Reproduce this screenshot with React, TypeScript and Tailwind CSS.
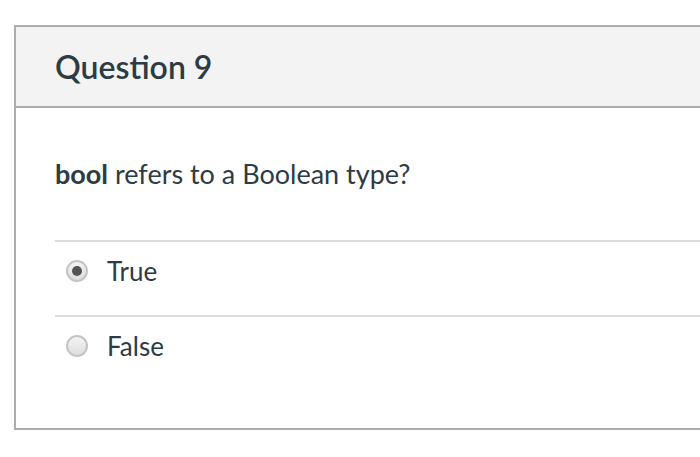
import React from 'react';

const Radio: React.FC<{ checked?: boolean }> = ({ checked }) => (
  <span className="w-[22px] h-[22px] rounded-full border-2 border-[#c4c4c4] bg-gradient-to-b from-[#f4f4f4] to-[#dedede] flex items-center justify-center shrink-0">
    {checked && <span className="w-[10px] h-[10px] rounded-full bg-[#555]" />}
  </span>
);

export default function App() {
  const answers = [
    { label: 'True', checked: true },
    { label: 'False', checked: false },
  ];

  return (
    <div className="w-[700px] h-[457px] bg-white pt-[25px] pl-[14px] overflow-hidden" style={{ fontFamily: 'Lato, "Noto Sans", sans-serif' }}>
      <div className="w-[720px] border-2 border-[#adadad] text-[#2d3b45]">
        <div className="h-[81px] bg-[#f3f3f3] border-b-2 border-[#adadad] pl-[39px] flex items-center">
          <h2 className="text-[32px] leading-[40px] font-semibold">Question 9</h2>
        </div>
        <div className="pl-[39px] pt-[50px] pb-[38px]">
          <p className="text-[27px] leading-[32px] mb-[50px]">
            <span className="font-bold">bool</span> refers to a Boolean type?
          </p>
          {answers.map((a) => (
            <div key={a.label} className="h-[75px] border-t-2 border-[#dddddd] pt-[13px] pl-[11px]">
              <div className="h-[32px] flex items-center gap-[19px]">
                <Radio checked={a.checked} />
                <span className="text-[26px] leading-[32px]">{a.label}</span>
              </div>
            </div>
          ))}
        </div>
      </div>
    </div>
  );
}
